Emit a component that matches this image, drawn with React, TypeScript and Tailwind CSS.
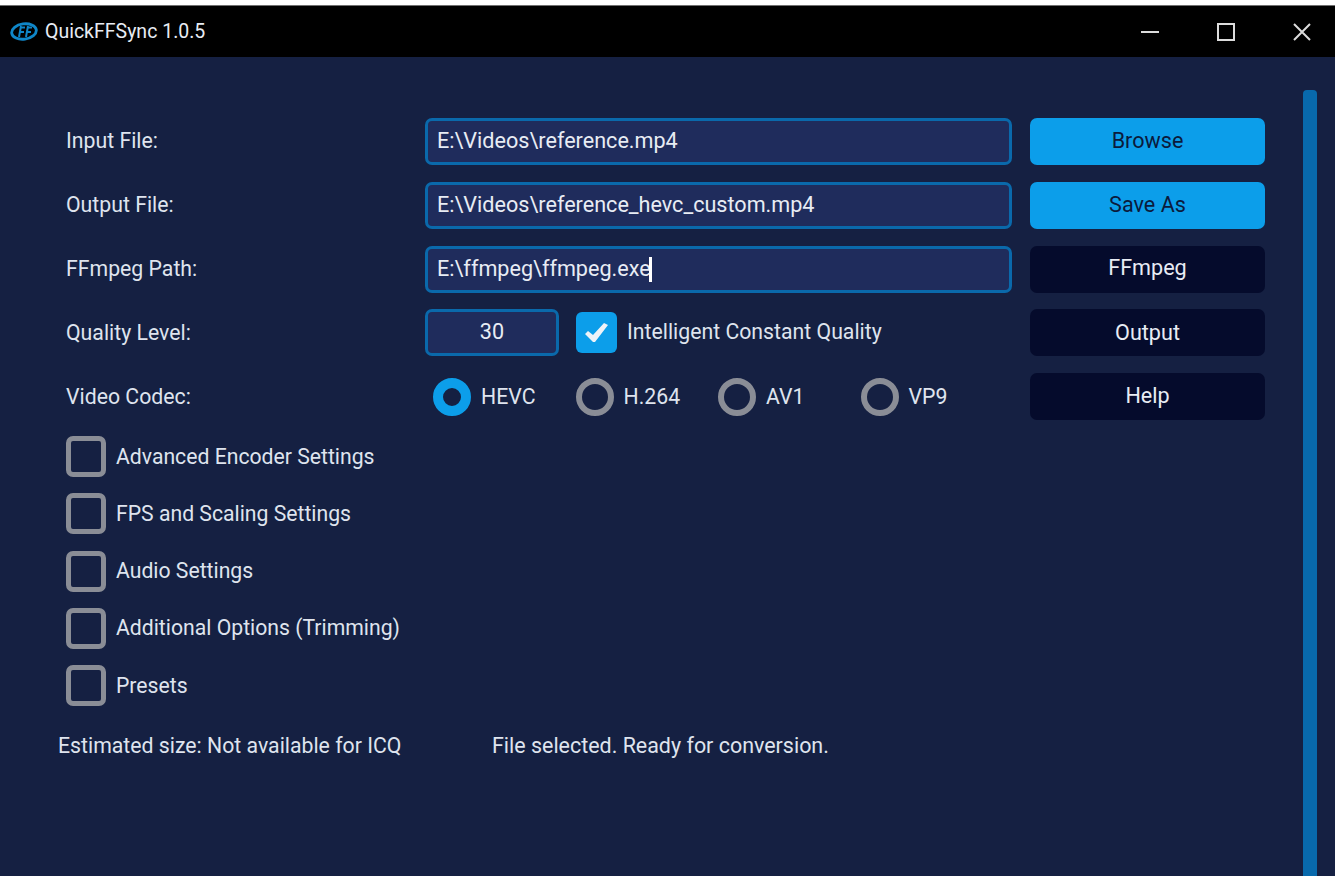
const fieldClass =
  'flex h-[47px] items-center rounded-[7px] border-[3px] border-[#0a69ab] bg-[#1f2c5c] text-[21.6px] text-[#e8ecf4]';

function TextField({ value, caret }: { value: string; caret?: boolean }) {
  return (
    <div className={`${fieldClass} w-[587px] pl-[9px]`}>
      <span>{value}</span>
      {caret && <span className="-ml-[2px] h-[25px] w-[3px] bg-white" />}
    </div>
  );
}

function ActionButton({ label, primary, nudge }: { label: string; primary?: boolean; nudge?: boolean }) {
  return (
    <div
      className={`flex h-[47px] w-[235px] items-center justify-center rounded-[7px] text-[21.6px] ${
        nudge ? 'pb-px' : ''
      } ${primary ? 'bg-[#0c9eea] text-[#0b1a3c]' : 'bg-[#050b2c] text-[#e8ecf4]'}`}
    >
      {label}
    </div>
  );
}

function Radio({ label, active }: { label: string; active?: boolean }) {
  return (
    <div className="flex w-[142.5px] items-center gap-[10px]">
      <span
        className={`h-[38px] w-[38px] rounded-full ${
          active ? 'border-[10px] border-[#0c9eea]' : 'border-[6px] border-[#8a8d96]'
        }`}
      />
      <span className="text-[21.25px]">{label}</span>
    </div>
  );
}

function SectionToggle({ label }: { label: string }) {
  return (
    <div className="flex h-[41px] items-center gap-[10px]">
      <span className="h-[41px] w-[40px] rounded-[7px] border-[5px] border-[#8a8d96]" />
      <span className="text-[21.2px]">{label}</span>
    </div>
  );
}

function Logo() {
  return (
    <svg width="28" height="19" viewBox="0 0 28 19" fill="none" stroke="#0f86c8" strokeWidth="2.8">
      <ellipse cx="14" cy="9.5" rx="12.4" ry="7.6" transform="rotate(-8 14 9.5)" />
      <path d="M11 4 L9 15 M18 4 L16 15 M10 5.5 H15 M17 5.5 H22 M9.5 10 H14 M16.5 10 H21" strokeWidth="2" />
    </svg>
  );
}

function WindowIcon({ d }: { d: string }) {
  return (
    <svg width="18" height="18" viewBox="0 0 18 18" fill="none" stroke="#dcdcdc" strokeWidth="2">
      <path d={d} />
    </svg>
  );
}

export default function App() {
  return (
    <div className="flex h-[876px] w-[1335px] flex-col overflow-hidden bg-[#152042] font-['Roboto',sans-serif] text-[#dfe4ee]">
      <div className="h-[5px] bg-white" />
      <div className="h-px bg-[#6f6f6f]" />
      <header className="flex h-[51px] items-center bg-black text-white">
        <div className="ml-[10px] flex w-[35px]">
          <Logo />
        </div>
        <span className="text-[19.5px] text-[#e8ecf4]">QuickFFSync 1.0.5</span>
        <div className="ml-auto flex items-center gap-[58px] pr-[24px]">
          <WindowIcon d="M0 9 H18" />
          <WindowIcon d="M1 1 H17 V17 H1 Z" />
          <WindowIcon d="M1 1 L17 17 M17 1 L1 17" />
        </div>
      </header>

      <main className="flex min-h-0 flex-1">
        <div className="w-[1303px] pt-[61px]">
          <div className="grid grid-cols-[359px_605px_235px] gap-y-[16.75px] pl-[66px]">
            <span className="self-center pb-px text-[21.25px]">Input File:</span>
            <TextField value="E:\Videos\reference.mp4" />
            <ActionButton label="Browse" primary nudge />

            <span className="self-center pb-px text-[21.25px]">Output File:</span>
            <TextField value="E:\Videos\reference_hevc_custom.mp4" />
            <ActionButton label="Save As" primary nudge />

            <span className="self-center pb-px text-[21.25px]">FFmpeg Path:</span>
            <TextField value="E:\ffmpeg\ffmpeg.exe" caret />
            <ActionButton label="FFmpeg" nudge />

            <span className="self-center text-[21.25px]">Quality Level:</span>
            <div className="flex items-center">
              <div className={`${fieldClass} w-[134px] justify-center pb-px`}>30</div>
              <span className="ml-[17px] flex h-[41px] w-[41px] items-center justify-center rounded-[6px] bg-[#0c9eea]">
                <svg width="23" height="19" viewBox="0 0 23 19">
                  <path d="M0 11 L3 8 L8 12 L19 0 L23 2 L10 19 L8 19 Z" fill="#eef3f8" />
                </svg>
              </span>
              <span className="ml-[10px] pb-px text-[21.25px]">Intelligent Constant Quality</span>
            </div>
            <ActionButton label="Output" />

            <span className="self-center text-[21.25px]">Video Codec:</span>
            <div className="flex items-center pl-[8px]">
              <Radio label="HEVC" active />
              <Radio label="H.264" />
              <Radio label="AV1" />
              <Radio label="VP9" />
            </div>
            <ActionButton label="Help" />
          </div>

          <div className="mt-[16px] flex flex-col gap-[16.25px] pl-[66px]">
            <SectionToggle label="Advanced Encoder Settings" />
            <SectionToggle label="FPS and Scaling Settings" />
            <SectionToggle label="Audio Settings" />
            <SectionToggle label="Additional Options (Trimming)" />
            <SectionToggle label="Presets" />
          </div>

          <div className="mt-[24px] flex pl-[58px] text-[21.25px]">
            <span className="w-[434px]">Estimated size: Not available for ICQ</span>
            <span className="text-[21.45px]">File selected. Ready for conversion.</span>
          </div>
        </div>
        <div className="mt-[33px] w-[14px] rounded-t-[4px] bg-[#0869ac]" />
      </main>
    </div>
  );
}
